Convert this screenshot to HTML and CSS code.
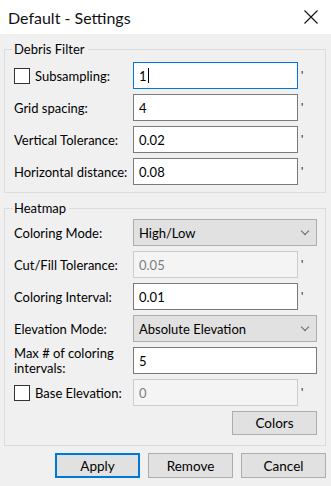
FILE: index.html
```html
<!DOCTYPE html>
<html lang="en">
<head>
  <meta charset="UTF-8">
  <title>Default - Settings</title>
  <link rel="stylesheet" href="styles.css">
</head>
<body>
  <div class="window">
    <div class="titlebar">
      <span class="title">Default - Settings</span>
      <svg class="close" width="14" height="14" viewBox="0 0 14 14">
        <path d="M0.5 0.5 L13.5 13.5 M13.5 0.5 L0.5 13.5" stroke="#111" stroke-width="1.1" fill="none"/>
      </svg>
    </div>

    <div class="content">
      <fieldset class="group">
        <legend>Debris Filter</legend>
        <div class="rows">
          <label class="label check"><span class="box"></span>Subsampling:</label>
          <div class="field focus">1<span class="caret"></span></div>
          <span class="tick">'</span>

          <label class="label">Grid spacing:</label>
          <div class="field">4</div>
          <span class="tick">'</span>

          <label class="label">Vertical Tolerance:</label>
          <div class="field">0.02</div>
          <span class="tick">'</span>

          <label class="label">Horizontal distance:</label>
          <div class="field">0.08</div>
          <span class="tick">'</span>
        </div>
      </fieldset>

      <fieldset class="group heat">
        <legend>Heatmap</legend>
        <div class="rows">
          <label class="label">Coloring Mode:</label>
          <div class="select wide">High/Low<span class="chev"></span></div>

          <label class="label">Cut/Fill Tolerance:</label>
          <div class="field disabled">0.05</div>
          <span class="tick">'</span>

          <label class="label">Coloring Interval:</label>
          <div class="field">0.01</div>
          <span class="tick">'</span>

          <label class="label">Elevation Mode:</label>
          <div class="select wide">Absolute Elevation<span class="chev"></span></div>

          <label class="label two">Max # of coloring<br>intervals:</label>
          <div class="field wide">5</div>

          <label class="label check"><span class="box"></span>Base Elevation:</label>
          <div class="field disabled">0</div>
          <span class="tick">'</span>
        </div>
        <div class="colors-row">
          <button class="btn colors">Colors</button>
        </div>
      </fieldset>

      <div class="actions">
        <button class="btn default">Apply</button>
        <button class="btn">Remove</button>
        <button class="btn">Cancel</button>
      </div>
    </div>
  </div>
</body>
</html>
```

FILE: styles.css
```css
body {
  margin: 0;
  padding: 0;
  background: #f0f0f0;
  font-family: 'Lato', 'Noto Sans', sans-serif;
  font-size: 13px;
  color: #000;
}
.window {
  width: 331px;
  height: 486px;
  overflow: hidden;
}
.titlebar {
  height: 34px;
  background: #fff;
  display: flex;
  align-items: center;
  justify-content: space-between;
  padding: 0 13px 0 8px;
}
.title {
  font-size: 16px;
  color: #111;
}
.close {
  display: block;
}
.content {
  padding: 7px 5px 0 4px;
}
.group {
  margin: 0;
  padding: 2px 8px 7px 9px;
  border: 1px solid #dcdcdc;
  border-radius: 0;
}
.group legend {
  padding: 0 3px 0 1px;
  margin-left: -1px;
  line-height: 16px;
  font-size: 13px;
}
.group.heat {
  margin-top: 7px;
  padding-bottom: 10px;
}
.rows {
  display: grid;
  grid-template-columns: 119px 165px 1fr;
  grid-auto-rows: 27px;
  row-gap: 5px;
  padding-top: 3px;
}
.heat .rows {
  padding-top: 1px;
}
.label {
  display: flex;
  align-items: center;
  white-space: nowrap;
}
.label.two {
  display: block;
  line-height: 15px;
  margin-top: -1px;
}
.check .box {
  width: 14px;
  height: 14px;
  border: 1px solid #333;
  background: #fff;
  margin-right: 5px;
}
.field {
  box-sizing: border-box;
  height: 27px;
  border: 1px solid #7a7a7a;
  background: #fff;
  padding: 5px 5px 0;
  display: flex;
  align-items: flex-start;
}
.field.focus {
  border-color: #0078d7;
}
.field.disabled {
  border-color: #cccccc;
  background: #f4f4f4;
  color: #7d7d7d;
}
.caret {
  display: inline-block;
  width: 1px;
  height: 15px;
  background: #000;
  margin: 0 0 0 1px;
}
.wide {
  grid-column: 2 / span 2;
}
.tick {
  padding: 7px 0 0 3px;
  font-size: 11px;
  line-height: 12px;
}
.select {
  box-sizing: border-box;
  height: 27px;
  border: 1px solid #adadad;
  background: #e1e1e1;
  padding: 0 6px 0 5px;
  display: flex;
  align-items: center;
  justify-content: space-between;
}
.chev {
  width: 5px;
  height: 5px;
  border-right: 1px solid #666;
  border-bottom: 1px solid #666;
  transform: rotate(45deg);
  margin: -4px 2px 0 0;
}
.colors-row {
  display: flex;
  justify-content: flex-end;
  margin-top: 5px;
}
.btn {
  box-sizing: border-box;
  font-family: inherit;
  font-size: 13.5px;
  color: #000;
  background: #e1e1e1;
  border: 1px solid #adadad;
  border-radius: 0;
  padding: 0;
  height: 25px;
  width: 85px;
}
.btn.colors {
  height: 24px;
}
.btn.default {
  border: 2px solid #0078d7;
}
.actions {
  display: flex;
  justify-content: flex-end;
  gap: 8px;
  margin-top: 7px;
}
```
